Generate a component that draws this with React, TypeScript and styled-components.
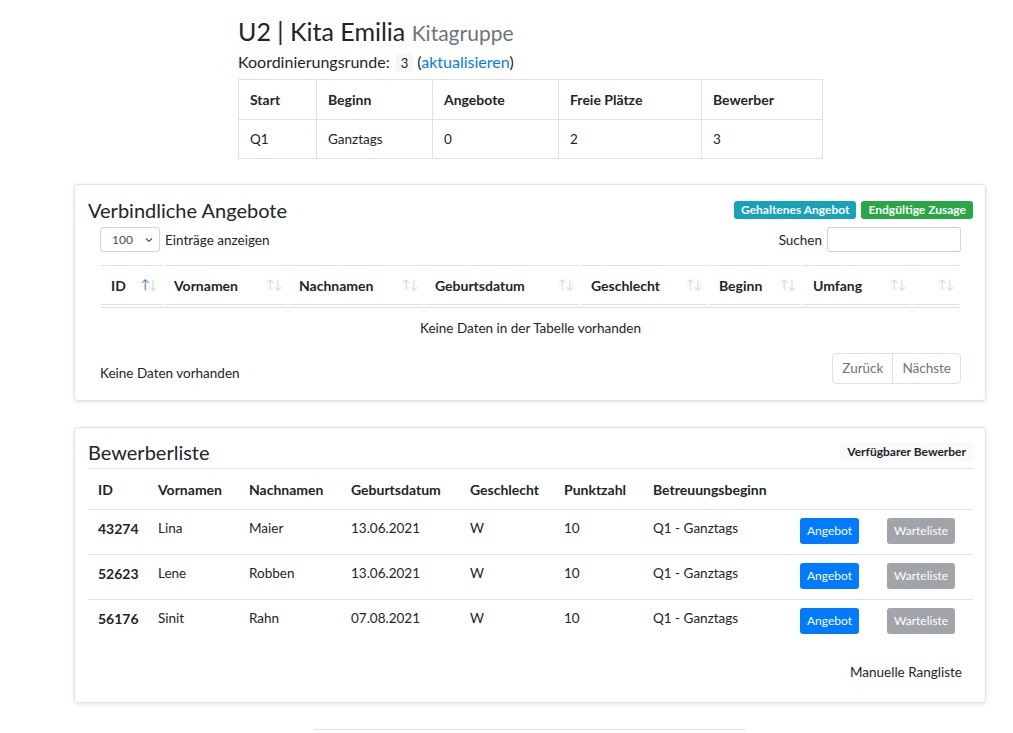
import styled, { createGlobalStyle } from "styled-components";

const GlobalStyle = createGlobalStyle`
  body {
    margin: 0;
    background: #fff;
    color: #212529;
    font-family: Lato, "Open Sans", "Liberation Sans", sans-serif;
    font-size: 13.5px;
  }
  * {
    box-sizing: border-box;
  }
`;

const Page = styled.div`
  padding: 16px 0 0 74px;
  width: 986px;
`;

const Header = styled.div`
  margin-left: 164px;
  width: 584px;
`;

const Title = styled.h3`
  margin: 0;
  font-size: 25px;
  line-height: 30px;
  font-weight: 400;

  small {
    font-size: 21px;
    color: #6c757d;
  }
`;

const RoundLine = styled.div`
  margin-top: 2px;
  font-size: 16px;
  line-height: 24px;

  a {
    color: #007bff;
    text-decoration: none;
  }
`;

const Code = styled.span`
  display: inline-block;
  margin: 0 4px 0 2px;
  padding: 0 5px;
  background: #f5f6f7;
  border-radius: 3px;
  font-size: 13px;
  line-height: 18px;
`;

const InfoTable = styled.table`
  margin-top: 5px;
  width: 584px;
  border-collapse: collapse;
  table-layout: fixed;

  th,
  td {
    border: 1px solid #dee2e6;
    padding: 11px 11px 10px;
    line-height: 17px;
    text-align: left;
  }
  th {
    font-size: 14px;
    font-weight: 700;
    padding-bottom: 11px;
  }
`;

const Card = styled.section<{ $top: number }>`
  margin-top: ${(p) => p.$top}px;
  border: 1px solid #e2e2e2;
  border-radius: 4px;
  box-shadow: 0 1px 4px rgba(0, 0, 0, 0.12);
  padding: 0 12px 0 13px;
`;

const CardHead = styled.div<{ $pad: number }>`
  display: flex;
  align-items: center;
  justify-content: space-between;
  padding-top: ${(p) => p.$pad}px;
  height: ${(p) => p.$pad + 28}px;
`;

const CardTitle = styled.h4`
  margin: 0;
  font-size: 20px;
  line-height: 28px;
  font-weight: 400;
`;

const Badges = styled.div`
  display: flex;
  gap: 5px;
`;

const Badge = styled.span<{ $bg: string; $fg?: string }>`
  display: inline-block;
  height: 18px;
  padding: 0 7px;
  border-radius: 3px;
  background: ${(p) => p.$bg};
  color: ${(p) => p.$fg ?? "#fff"};
  font-size: 12px;
  font-weight: 700;
  line-height: 18px;
`;

const DataWrap = styled.div`
  margin: 0 12px 0 12px;
  padding-bottom: 16px;
`;

const Controls = styled.div`
  display: flex;
  justify-content: space-between;
  align-items: center;
  margin-top: 3px;
  height: 25px;
`;

const Label = styled.label`
  display: flex;
  align-items: center;
  gap: 5px;
`;

const FakeSelect = styled.div`
  display: flex;
  align-items: center;
  justify-content: space-between;
  width: 60px;
  height: 25px;
  padding: 0 6px 0 11px;
  border: 1px solid #ced4da;
  border-radius: 3px;
  font-size: 12px;
  color: #495057;
`;

const SearchInput = styled.input`
  width: 134px;
  height: 25px;
  border: 1px solid #ced4da;
  border-radius: 3px;
  outline: none;
`;

const GridHead = styled.div`
  display: grid;
  grid-template-columns: 61px 123px 134px 154px 126px 92px 108px 46px;
  column-gap: 2px;
  margin: 13px 1px 0;
`;

const HeadCell = styled.div`
  display: flex;
  align-items: center;
  justify-content: space-between;
  height: 40px;
  padding: 0 6px 0 10px;
  border-top: 1px solid #dee2e6;
  border-bottom: 1px solid #dee2e6;
  font-weight: 700;
  font-size: 14px;
`;

const Arrows = styled.span`
  font-size: 13px;
  font-weight: 400;
  letter-spacing: -2px;
  margin-top: -2px;
`;

const Arrow = styled.span<{ $on?: boolean }>`
  opacity: ${(p) => (p.$on ? 0.9 : 0.25)};
  color: ${(p) => (p.$on ? "#4a78b0" : "#5a6a7a")};
`;

const EmptyRow = styled.div`
  margin: 2px 1px 0;
  border-top: 1px solid #dee2e6;
  padding: 10px 0 8px;
  line-height: 21px;
  text-align: center;
`;

const Footer = styled.div`
  display: flex;
  justify-content: space-between;
  align-items: flex-end;
  margin-top: 6px;
  line-height: 21px;
`;

const Pager = styled.div`
  display: flex;
  border: 1px solid #dee2e6;
  border-radius: 4px;
  height: 31px;
`;

const PageBtn = styled.span<{ $first?: boolean }>`
  display: flex;
  align-items: center;
  padding: 0 9px;
  color: #6c757d;
  border-left: ${(p) => (p.$first ? "none" : "1px solid #dee2e6")};
`;

const ListTable = styled.table`
  width: 885px;
  border-collapse: collapse;
  table-layout: fixed;
  margin-top: 2px;
  border-top: 1px solid #dee2e6;

  th,
  td {
    padding: 8px 10px 10px;
    line-height: 21px;
    text-align: left;
    vertical-align: top;
  }
  th {
    font-size: 14px;
    padding: 10px 10px 9px;
  }
  tbody td {
    border-top: 1px solid #dee2e6;
  }
  tbody td:first-child {
    font-weight: 700;
    font-size: 14px;
  }
`;

const Btn = styled.span<{ $variant: "primary" | "secondary" }>`
  display: inline-block;
  vertical-align: top;
  height: 26px;
  padding: 0 7px;
  border-radius: 3px;
  font-size: 12px;
  line-height: 26px;
  color: #fff;
  background: ${(p) => (p.$variant === "primary" ? "#007bff" : "#a1a5aa")};
`;

const ListFooter = styled.div`
  display: flex;
  justify-content: flex-end;
  padding: 18px 11px 19px 0;
  line-height: 21px;
`;

const Rule = styled.hr`
  margin: 26px 0 0 240px;
  width: 432px;
  border: 0;
  border-top: 1px solid #dee2e6;
`;

const headCols = ["ID", "Vornamen", "Nachnamen", "Geburtsdatum", "Geschlecht", "Beginn", "Umfang", ""];

const bewerber = [
  { id: "43274", vorname: "Lina", nachname: "Maier", geburt: "13.06.2021" },
  { id: "52623", vorname: "Lene", nachname: "Robben", geburt: "13.06.2021" },
  { id: "56176", vorname: "Sinit", nachname: "Rahn", geburt: "07.08.2021" },
];

const listWidths = [60, 91, 102, 119, 94, 89, 147, 87, 96];

const App = () => {
  return (
    <>
      <GlobalStyle />
      <Page>
        <Header>
          <Title>
            U2 | Kita Emilia <small>Kitagruppe</small>
          </Title>
          <RoundLine>
            Koordinierungsrunde: <Code>3</Code>(<a href="#">aktualisieren</a>)
          </RoundLine>
          <InfoTable>
            <colgroup>
              <col style={{ width: 78 }} />
              <col style={{ width: 116 }} />
              <col style={{ width: 126 }} />
              <col style={{ width: 143 }} />
              <col style={{ width: 121 }} />
            </colgroup>
            <thead>
              <tr>
                <th>Start</th>
                <th>Beginn</th>
                <th>Angebote</th>
                <th>Freie Plätze</th>
                <th>Bewerber</th>
              </tr>
            </thead>
            <tbody>
              <tr>
                <td>Q1</td>
                <td>Ganztags</td>
                <td>0</td>
                <td>2</td>
                <td>3</td>
              </tr>
            </tbody>
          </InfoTable>
        </Header>

        <Card $top={25}>
          <CardHead $pad={11}>
            <CardTitle>Verbindliche Angebote</CardTitle>
            <Badges>
              <Badge $bg="#17a2b8">Gehaltenes Angebot</Badge>
              <Badge $bg="#28a745">Endgültige Zusage</Badge>
            </Badges>
          </CardHead>
          <DataWrap>
            <Controls>
              <Label>
                <FakeSelect>
                  100
                  <svg width="8" height="6" viewBox="0 0 8 6">
                    <polyline points="1,1.5 4,4.5 7,1.5" fill="none" stroke="#555" strokeWidth="1.1" />
                  </svg>
                </FakeSelect>
                Einträge anzeigen
              </Label>
              <Label>
                Suchen
                <SearchInput type="search" />
              </Label>
            </Controls>
            <GridHead>
              {headCols.map((c, i) => (
                <HeadCell key={i}>
                  <span>{c}</span>
                  <Arrows>
                    <Arrow $on={i === 0}>↑</Arrow>
                    <Arrow>↓</Arrow>
                  </Arrows>
                </HeadCell>
              ))}
            </GridHead>
            <EmptyRow>Keine Daten in der Tabelle vorhanden</EmptyRow>
            <Footer>
              <span>Keine Daten vorhanden</span>
              <Pager>
                <PageBtn $first>Zurück</PageBtn>
                <PageBtn>Nächste</PageBtn>
              </Pager>
            </Footer>
          </DataWrap>
        </Card>

        <Card $top={26}>
          <CardHead $pad={10}>
            <CardTitle>Bewerberliste</CardTitle>
            <Badge $bg="#f8f9fa" $fg="#212529">
              Verfügbarer Bewerber
            </Badge>
          </CardHead>
          <ListTable>
            <colgroup>
              {listWidths.map((w, i) => (
                <col key={i} style={{ width: w }} />
              ))}
            </colgroup>
            <thead>
              <tr>
                <th>ID</th>
                <th>Vornamen</th>
                <th>Nachnamen</th>
                <th>Geburtsdatum</th>
                <th>Geschlecht</th>
                <th>Punktzahl</th>
                <th>Betreuungsbeginn</th>
                <th></th>
                <th></th>
              </tr>
            </thead>
            <tbody>
              {bewerber.map((b) => (
                <tr key={b.id}>
                  <td>{b.id}</td>
                  <td>{b.vorname}</td>
                  <td>{b.nachname}</td>
                  <td>{b.geburt}</td>
                  <td>W</td>
                  <td>10</td>
                  <td>Q1 - Ganztags</td>
                  <td>
                    <Btn $variant="primary">Angebot</Btn>
                  </td>
                  <td>
                    <Btn $variant="secondary">Warteliste</Btn>
                  </td>
                </tr>
              ))}
            </tbody>
          </ListTable>
          <ListFooter>Manuelle Rangliste</ListFooter>
        </Card>

        <Rule />
      </Page>
    </>
  );
};

export default App;
